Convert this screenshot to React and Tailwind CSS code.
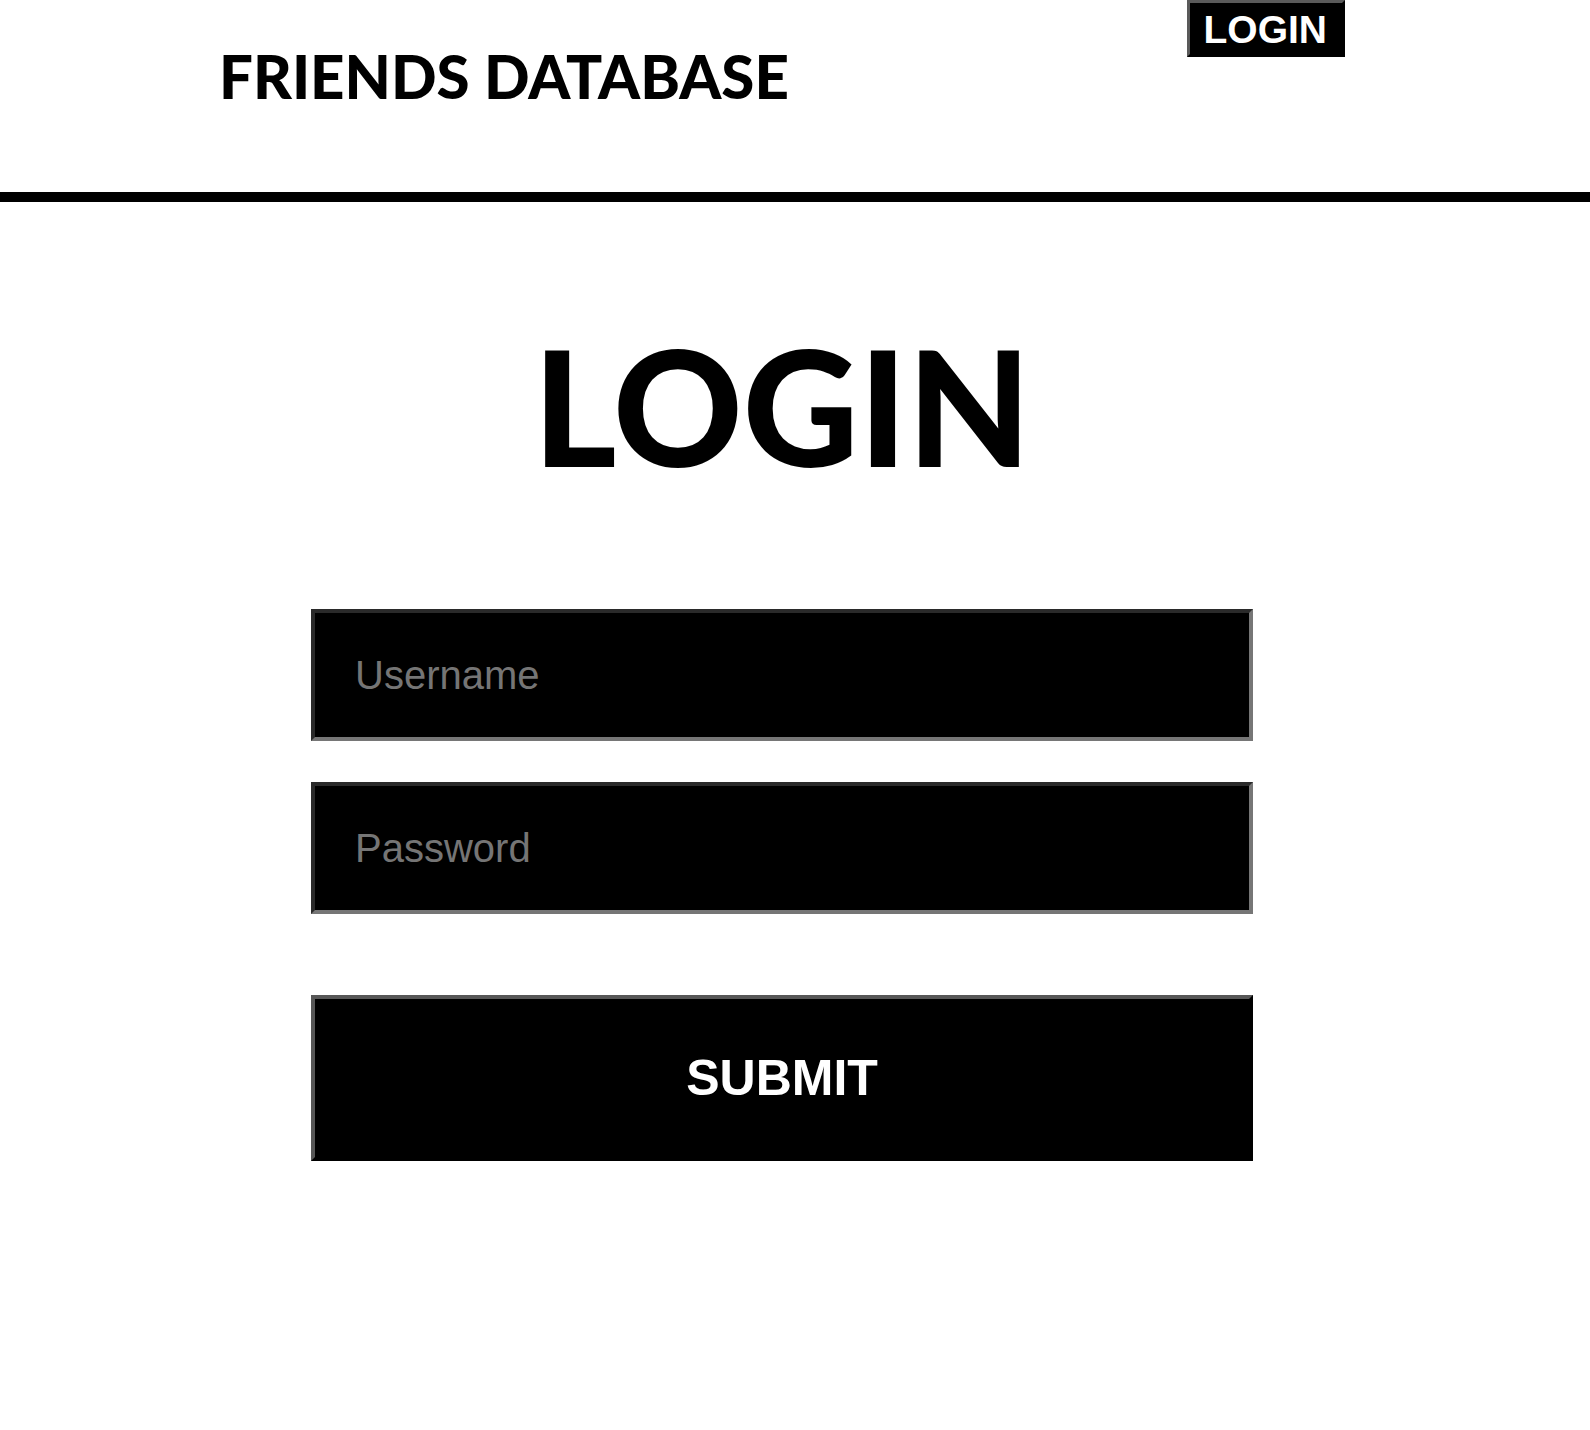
import React from "react";

const lato = "font-['Lato','Noto_Sans',sans-serif]";
const arial = "font-['Liberation_Sans',Arial,sans-serif]";

const inputClass = `${arial} h-[132px] w-full bg-black text-white text-[40px] pl-[40px] border-4 border-t-[#2a2a2a] border-l-[#2a2a2a] border-r-[#767676] border-b-[#767676] placeholder:text-[#757575] outline-none`;

const Header = () => {
	return (
		<header className="flex items-start h-[202px] border-b-[10px] border-black">
			{/* Site title */}
			<h1 className={`${lato} ml-[219px] mt-[46px] text-[60px] leading-none font-black text-black`}>
				FRIENDS DATABASE
			</h1>

			{/* Nav login button */}
			<button
				className={`${arial} ml-auto mr-[245px] h-[57px] pl-[14px] pr-[15px] pt-[2px] bg-black text-white text-[39px] font-bold leading-none border-[3px] border-t-[#5a5a5a] border-l-[#5a5a5a] border-r-black border-b-black`}
			>
				LOGIN
			</button>
		</header>
	);
};

const App = () => {
	return (
		<div className="min-h-screen bg-white">
			<Header />

			<main className="flex flex-col items-center pr-[26px]">
				<h2 className={`${lato} mt-[123px] text-[160px] leading-none font-black text-black`}>
					LOGIN
				</h2>

				<form className="mt-[124px] w-[942px] flex flex-col">
					<input type="text" placeholder="Username" className={inputClass} />
					<input type="password" placeholder="Password" className={`mt-[41px] ${inputClass}`} />
					<button
						type="submit"
						className={`${arial} mt-[81px] h-[166px] w-full bg-black text-white text-[50px] font-bold border-4 border-t-[#575757] border-l-[#575757] border-r-black border-b-black`}
					>
						SUBMIT
					</button>
				</form>
			</main>
		</div>
	);
};

export default App;
